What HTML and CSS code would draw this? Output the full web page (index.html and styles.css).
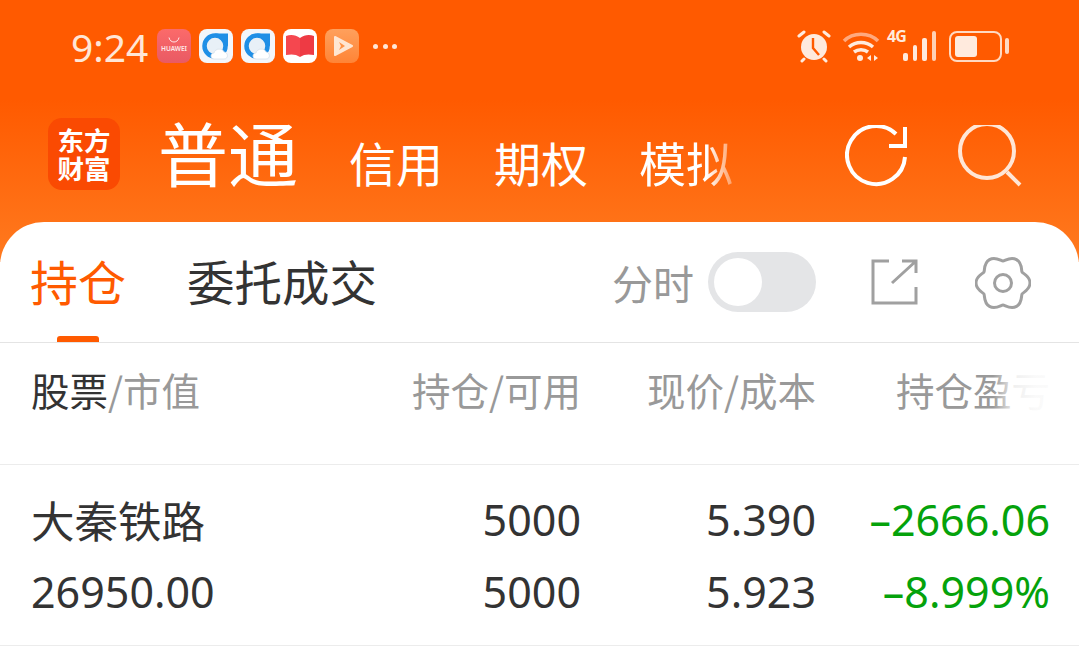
FILE: index.html
```html
<!DOCTYPE html>
<html lang="zh-CN">
<head>
    <meta charset="UTF-8">
    <title>持仓</title>
    <link rel="stylesheet" href="styles.css">
</head>
<body>
    <div class="header">
        <!-- Status bar -->
        <div class="status-bar">
            <span class="time">9:24</span>
            <div class="notify-icons">
                <div class="app-icon app-huawei">
                    <svg width="14" height="7" viewBox="0 0 14 7"><path d="M2 0.500c1 6 9 6 10 0" fill="none" stroke="#fff" stroke-width="1" opacity=".85"/></svg>
                    <span>HUAWEI</span>
                </div>
                <div class="app-icon app-white">
                    <svg width="34" height="34" viewBox="0 0 34 34"><circle cx="16" cy="17" r="10.500" fill="#e8f0f7" stroke="#1f8fe6" stroke-width="4.500"/><path d="M16 4.500h13v13z" fill="#1f8fe6"/><path d="M15 30c-4 0-4-6 0-6 1-5 9-5 10-1 4 0 5 7 0 7z" fill="#fff" stroke="#d5e0ea" stroke-width=".75"/></svg>
                </div>
                <div class="app-icon app-white">
                    <svg width="34" height="34" viewBox="0 0 34 34"><circle cx="16" cy="17" r="10.500" fill="#e8f0f7" stroke="#1f8fe6" stroke-width="4.500"/><path d="M16 4.500h13v13z" fill="#1f8fe6"/><path d="M15 30c-4 0-4-6 0-6 1-5 9-5 10-1 4 0 5 7 0 7z" fill="#fff" stroke="#d5e0ea" stroke-width=".75"/></svg>
                </div>
                <div class="app-icon app-book">
                    <svg width="34" height="34" viewBox="0 0 34 34"><path d="M3 7c5-2 10-1 14 2v19c-4-3-9-3-14-2z" fill="#f5474f"/><path d="M31 7c-5-2-10-1-14 2v19c4-3 9-3 14-2z" fill="#ee3a44"/></svg>
                </div>
                <div class="app-icon app-video">
                    <svg width="34" height="34" viewBox="0 0 34 34"><path d="M10 8l17 9-17 9z" fill="#ffe6d2" stroke="#ffe6d2" stroke-width="2" stroke-linejoin="round"/><path d="M14 13l6 4-6 4 2-4z" fill="#ff9448"/></svg>
                </div>
                <div class="more-dots"><i></i><i></i><i></i></div>
            </div>
            <div class="system-icons">
                <svg class="ic-alarm" width="34" height="34" viewBox="0 0 34 34">
                    <circle cx="17" cy="18" r="13" fill="#ffeadd"/>
                    <path d="M16 9v10l6 7" fill="none" stroke="#ff5a00" stroke-width="2.400"/>
                    <path d="M2 7l5-4M32 7l-5-4M7 30l-2 2M27 30l2 2" stroke="#ffeadd" stroke-width="3" stroke-linecap="round"/>
                </svg>
                <svg class="ic-wifi" width="38" height="32" viewBox="0 0 38 32">
                    <path d="M2 11c9-9 25-9 34 0" fill="none" stroke="#ffa97e" stroke-width="3.500"/>
                    <path d="M7 17c7-6 17-6 24 0" fill="none" stroke="#ffeadd" stroke-width="3.500"/>
                    <path d="M12 22c4-3 10-3 14 0" fill="none" stroke="#ffeadd" stroke-width="3.500"/>
                    <circle cx="18" cy="28" r="3" fill="#ffeadd"/>
                    <path d="M29 25v6l-4-3zM32 25v6l4-3z" fill="#ffeadd"/>
                </svg>
                <div class="signal">
                    <span class="net">4G</span>
                    <div class="bars"><i class="b1"></i><i class="b2"></i><i class="b3"></i><i class="b4"></i></div>
                </div>
                <div class="battery">
                    <div class="battery-body"><div class="battery-level"></div></div>
                    <div class="battery-tip"></div>
                </div>
            </div>
        </div>

        <!-- Account type nav -->
        <div class="nav">
            <div class="logo"><span>东方</span><span>财富</span></div>
            <div class="nav-tabs">
                <span class="nav-tab active">普通</span>
                <span class="nav-tab">信用</span>
                <span class="nav-tab">期权</span>
                <span class="nav-tab fading">模拟</span>
            </div>
            <svg class="nav-icon" width="66" height="64" viewBox="0 0 66 64">
                <path d="M60 32A29 29 0 1 1 51 9" fill="none" stroke="#fff" stroke-width="4"/>
                <path d="M60 2V21H44" fill="none" stroke="#fff" stroke-width="4"/>
            </svg>
            <svg class="nav-icon search" width="64" height="64" viewBox="0 0 64 64">
                <circle cx="29" cy="26" r="27" fill="none" stroke="#ffe6d6" stroke-width="4"/>
                <path d="M49 47l13 13" stroke="#ffe6d6" stroke-width="4"/>
            </svg>
        </div>
    </div>

    <div class="card">
        <!-- Tabs -->
        <div class="tabs">
            <div class="tab active">持仓<div class="tab-line"></div></div>
            <div class="tab second">委托成交</div>
            <div class="tab-tools">
                <span class="switch-label">分时</span>
                <div class="switch"><div class="switch-knob"></div></div>
                <svg class="tool-export" width="48" height="48" viewBox="0 0 48 48" fill="none" stroke="#a0a0a0" stroke-width="3">
                    <path d="M19 3H3V45H46V29"/>
                    <path d="M22 25L46 3M32 3H46V15"/>
                </svg>
                <svg class="tool-gear" width="56" height="56" viewBox="0 0 56 56" fill="none" stroke="#a0a0a0" stroke-width="3">
                    <path d="M55 28C55 35 48.050 37.270 47.050 39S47.560 47.880 41.500 51.380S30 50 28 50S20.560 54.880 14.500 51.380S9.950 40.730 8.950 39S1 35 1 28S7.950 18.730 8.950 17S8.440 8.120 14.500 4.620S26 6 28 6S35.440 1.120 41.500 4.620S46.050 15.270 47.050 17S55 21 55 28Z"/>
                    <circle cx="28" cy="28" r="8.500"/>
                </svg>
            </div>
        </div>

        <!-- Table head -->
        <div class="table-head">
            <div class="col col-name"><span class="dark">股票</span>/市值</div>
            <div class="col col-hold">持仓/可用</div>
            <div class="col col-price">现价/成本</div>
            <div class="col col-profit">持仓盈亏</div>
            <div class="head-fade"></div>
        </div>

        <!-- Position row -->
        <div class="table-row">
            <div class="col col-name">
                <div class="stock-name">大秦铁路</div>
                <div>26950.00</div>
            </div>
            <div class="col col-hold">
                <div>5000</div>
                <div>5000</div>
            </div>
            <div class="col col-price">
                <div>5.390</div>
                <div>5.923</div>
            </div>
            <div class="col col-profit loss">
                <div>–2666.06</div>
                <div>–8.999%</div>
            </div>
        </div>
    </div>
</body>
</html>
```

FILE: styles.css
```css
* {
    box-sizing: border-box;
}

html, body {
    height: 100%;
}

body {
    margin: 0;
    overflow: hidden;
    background-color: #fff;
    color: #333;
    font-family: "Noto Sans", "Noto Sans CJK SC", sans-serif;
}

.header {
    height: 262px;
    padding-bottom: 40px;
    background: linear-gradient(180deg, #ff5a00 0%, #ff5a00 38%, #ff7a1f 100%);
}

/* status bar */
.status-bar {
    display: flex;
    align-items: center;
    height: 92px;
    padding: 0 71px;
}

.time {
    flex: none;
    width: 78px;
    color: #ffe6d6;
    font-size: 39px;
    line-height: 1;
    white-space: nowrap;
}

.notify-icons {
    display: flex;
    align-items: center;
    gap: 8px;
    margin-left: 8px;
}

.app-icon {
    display: flex;
    flex: none;
    flex-direction: column;
    align-items: center;
    justify-content: center;
    width: 34px;
    height: 34px;
    border-radius: 8px;
    overflow: hidden;
}

.app-huawei {
    background: linear-gradient(180deg, #fb6a6a, #e95a64);
    color: #ffe9e9;
    font-size: 6.500px;
    font-weight: 600;
    line-height: 9px;
    padding-bottom: 2px;
}

.app-white {
    background-color: #f3f6fa;
}

.app-book {
    background-color: #fff;
}

.app-video {
    background: linear-gradient(180deg, #ffa05c, #ff8436);
}

.more-dots {
    display: flex;
    gap: 4.500px;
    margin-left: 6px;
}

.more-dots i {
    width: 5px;
    height: 5px;
    border-radius: 50%;
    background-color: #ffe6d6;
}

.system-icons {
    display: flex;
    align-items: center;
    margin-left: auto;
    margin-right: -1px;
}

.ic-wifi {
    margin-left: 11px;
}

.signal {
    position: relative;
    width: 49px;
    height: 34px;
    margin-left: 7px;
}

.net {
    position: absolute;
    left: 0;
    top: -2px;
    color: #ffeadd;
    font-size: 16px;
    font-weight: 700;
    letter-spacing: -1px;
    line-height: 18px;
}

.bars {
    position: absolute;
    right: 0;
    bottom: 2px;
    display: flex;
    align-items: flex-end;
    gap: 5px;
}

.bars i {
    width: 4.500px;
    border-radius: 2px;
    background-color: #ffeadd;
}

.bars .b1 { height: 8px; }
.bars .b2 { height: 16px; }
.bars .b3 { height: 23px; }
.bars .b4 { height: 30px; background-color: #ffd0b4; }

.battery {
    display: flex;
    align-items: center;
    margin-left: 13px;
}

.battery-body {
    width: 53px;
    height: 31px;
    padding: 3px 4px;
    border: 2.500px solid #ffd9c2;
    border-radius: 8px;
}

.battery-level {
    width: 22px;
    height: 100%;
    border-radius: 3px;
    background-color: #ffeadd;
}

.battery-tip {
    width: 4px;
    height: 16px;
    margin-left: 3px;
    border-radius: 2px;
    background-color: #ffd9c2;
}

/* nav */
.nav {
    display: flex;
    align-items: center;
    height: 130px;
    padding-left: 48px;
}

.logo {
    display: flex;
    flex-direction: column;
    align-items: center;
    justify-content: center;
    flex: none;
    width: 72px;
    height: 72px;
    margin-bottom: 6px;
    border-radius: 14px;
    background-color: #fa4a02;
    color: #fff;
    font-family: "Noto Sans CJK SC", sans-serif;
    font-size: 26.500px;
    font-weight: 700;
    line-height: 28px;
}

.nav-tabs {
    flex: none;
    display: flex;
    align-items: baseline;
    gap: 51px;
    width: 687px;
    margin-left: 38px;
    color: #fff;
    font-family: "Noto Sans CJK SC", sans-serif;
    font-size: 47px;
    line-height: 80px;
    white-space: nowrap;
}

.nav-tab.active {
    font-size: 70px;
}

.nav-tab.fading {
    -webkit-mask-image: linear-gradient(90deg, #000 72%, rgba(0, 0, 0, .35) 100%);
    mask-image: linear-gradient(90deg, #000 72%, rgba(0, 0, 0, .35) 100%);
}

.nav-icon {
    flex: none;
}

.nav-icon.search {
    margin-left: 47px;
}

/* card */
.card {
    position: relative;
    height: 430px;
    margin-top: -40px;
    border-radius: 44px 44px 0 0;
    background-color: #fff;
}

.tabs {
    display: flex;
    align-items: center;
    height: 121px;
    padding-left: 30px;
    border-bottom: 1px solid #e4e4e4;
    font-family: "Noto Sans CJK SC", sans-serif;
    white-space: nowrap;
}

.tab {
    position: relative;
    flex: none;
    height: 120px;
    margin-right: 61px;
    color: #333;
    font-size: 48px;
    line-height: 117px;
}

.tab.second {
    font-size: 47.500px;
}

.tab.active {
    color: #ff5a00;
}

.tab-line {
    position: absolute;
    left: 27px;
    bottom: 0;
    width: 42px;
    height: 6px;
    border-radius: 3px 3px 0 0;
    background-color: #ff5a00;
}

.tab-tools {
    display: flex;
    flex: none;
    align-items: center;
    margin-left: 174px;
}

.switch-label {
    color: #999;
    font-size: 41px;
}

.switch {
    width: 108px;
    height: 60px;
    margin-left: 14px;
    padding: 6px;
    border-radius: 30px;
    background-color: #e4e5e7;
}

.switch-knob {
    width: 48px;
    height: 48px;
    border-radius: 50%;
    background-color: #fff;
}

.tool-export {
    margin-left: 54px;
}

.tool-gear {
    margin-left: 57px;
    margin-top: 2px;
}

/* table */
.table-head {
    position: relative;
    display: flex;
    height: 122px;
    padding: 17px 0 0 31px;
    border-bottom: 1px solid #ececec;
    color: #999;
    font-family: "Noto Sans CJK SC", sans-serif;
    font-size: 38.500px;
    line-height: 58px;
}

.table-head .dark {
    color: #333;
}

.head-fade {
    position: absolute;
    right: 0;
    top: 0;
    width: 86px;
    height: 100%;
    background: linear-gradient(90deg, rgba(255, 255, 255, 0), rgba(255, 255, 255, .85) 25%, rgba(255, 255, 255, .95) 50%);
}

.col {
    flex: none;
    text-align: right;
    white-space: nowrap;
}

.col-name {
    width: 250px;
    text-align: left;
}

.col-hold {
    width: 300px;
}

.col-price {
    width: 235px;
}

.col-profit {
    width: 234px;
}

.table-row {
    display: flex;
    height: 181px;
    padding: 19px 0 0 31px;
    border-bottom: 1px solid #ececec;
    color: #333;
    font-size: 43px;
    line-height: 72px;
}

.stock-name {
    font-family: "Noto Sans CJK SC", sans-serif;
    font-size: 43.500px;
}

.loss {
    color: #05a20b;
}
```
